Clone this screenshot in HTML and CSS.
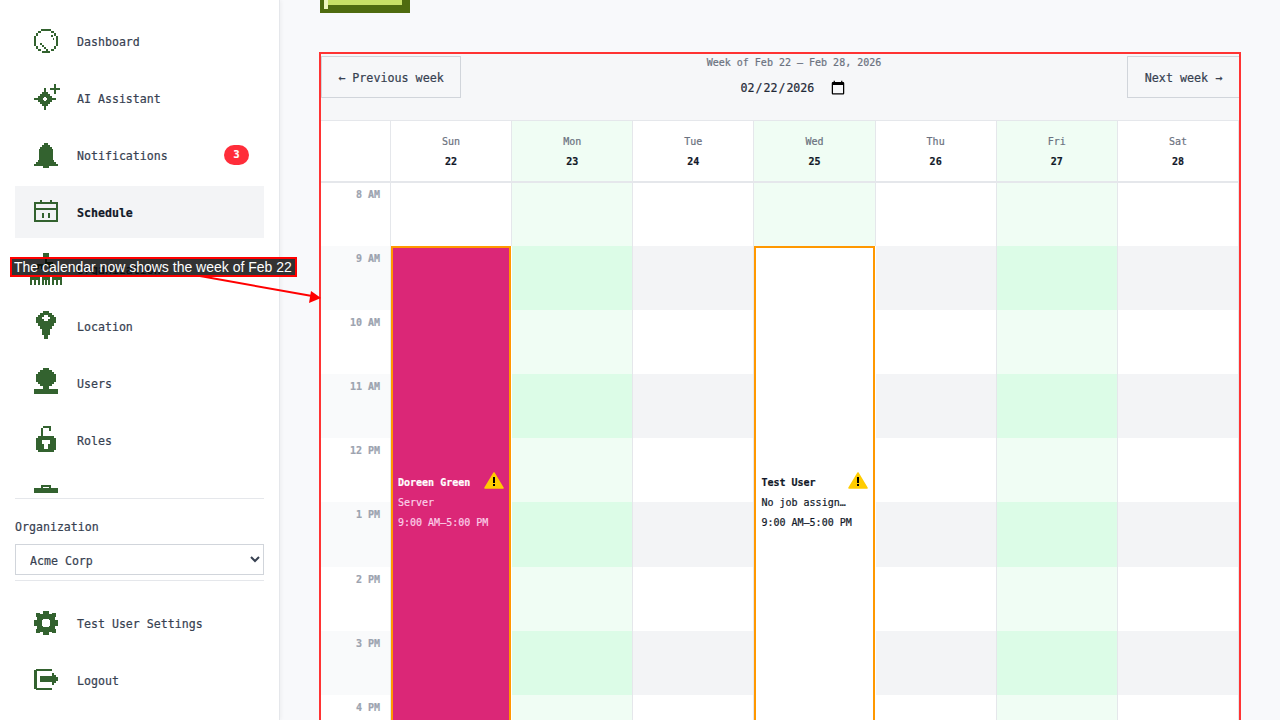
FILE: index.html
```html
<!DOCTYPE html>
<html lang="en">
<head>
    <meta charset="UTF-8">
    <title>Schedule</title>
    <link rel="stylesheet" href="styles.css">
</head>
<body>

<aside class="sidebar">
    <nav class="nav">
        <a class="nav-item">
            <svg class="icon" viewBox="0 0 24 24"><path d="M7 0h10v2H7zM4 2h3v2H4zM17 2h3v2h-3zM2 4h2v3H2zM20 4h2v3h-2zM0 7h2v10H0zM22 7h2v10h-2zM2 17h2v3H2zM20 17h2v3h-2zM4 20h3v2H4zM17 20h3v2h-3zM8 22h8v2H8zM6 14h2v2H6zM8 16h2v2H8zM10 18h2v2h-2zM12 20h2v2h-2zM17 6h2v2h-2zM19 9h1v2h-1z"/></svg>
            <span>Dashboard</span>
        </a>
        <a class="nav-item">
            <svg class="icon" viewBox="0 0 24 24"><g transform="translate(0 1)"><path fill-rule="evenodd" d="M10 1h2v4h2v2h2v2h2v2h4v2h-4v2h-2v2h-2v2h-2v4h-2v-4H8v-2H6v-2H4v-2H0v-2h4V9h2V7h2V5h2zM10 10h2v1h1v2h-1v1h-2v-1H9v-2h1z"/><path d="M20-3h2v4h4v2h-4v4h-2V3h-4V1h4z"/></g></svg>
            <span>AI Assistant</span>
        </a>
        <a class="nav-item">
            <svg class="icon" viewBox="0 0 24 24"><path transform="translate(0 1)" d="M10-1h4v2h2v2h2v2h1v11h1v2h2v2h2v2h-9v2H9v-2H0v-2h2v-2h2v-2h1V5h1V3h2V1h2z"/></svg>
            <span>Notifications</span>
            <b class="badge">3</b>
        </a>
        <a class="nav-item active">
            <svg class="icon" viewBox="0 0 24 24"><path fill-rule="evenodd" d="M6 0h2v2h8V0h2v2h6v20H0V2h6zM2 4v4h20V4zM2 10v10h20V10z"/><path d="M8 13h2v5H8zM14 13h2v5h-2z"/></svg>
            <span>Schedule</span>
        </a>
        <a class="nav-item">
            <svg class="icon" viewBox="0 0 24 24"><path d="M9-4h6v5h-2v4h6v4h-2v3h-2V9H9v3H7V9H5v3H3V7h8V1H9zM-4 20h10v3H-4zM-4 23h2v5h-2zM0 23h2v5H0zM4 23h2v5H4zM8 20h8v3H8zM8 23h2v5H8zM11 23h2v5h-2zM14 23h2v5h-2zM18 20h10v3H18zM18 23h2v5h-2zM22 23h2v5h-2zM26 23h2v5h-2z"/></svg>
            <span>Organization</span>
        </a>
        <a class="nav-item">
            <svg class="icon" viewBox="0 0 24 24"><path transform="translate(0 1)" fill-rule="evenodd" d="M9-4h6v2h3v2h2v2h2v6h-2v3h-2v3h-2v6h-2v4h-4v-4H8v-6H6v-3H4V8H2V2h2V0h2v-2h3zM10 0v2H8v2h2v2h4V4h2V2h-2V0z"/></svg>
            <span>Location</span>
        </a>
        <a class="nav-item">
            <svg class="icon" viewBox="0 0 24 24"><path transform="translate(0 1)" d="M9-4h6v2h3v2h2v2h2v8h-2v2h-2v2h-3v3h9v5H0v-5h9v-3H6v-2H4v-2H2V2h2V0h2v-2h3z"/></svg>
            <span>Users</span>
        </a>
        <a class="nav-item">
            <svg class="icon" viewBox="0 0 24 24"><g transform="translate(0 1)"><path fill-rule="evenodd" d="M4 7h16v2h2v12h-2v2H4v-2H2V9h2zM8 11v4h2v5h4v-5h2v-4z"/><path d="M7-1h2v8H7zM9-3h8v2H9zM15-1h2v3h-2z"/></g></svg>
            <span>Roles</span>
        </a>
        <a class="nav-item">
            <svg class="icon" viewBox="0 0 24 24"><path d="M7 0h10v3h-2V2H9v1H7zM0 3h24v16H0z"/></svg>
        </a>
    </nav>

    <div class="org-box">
        <label class="org-label" for="org-select">Organization</label>
        <select id="org-select" class="org-select">
            <option>Acme Corp</option>
        </select>
    </div>

    <div class="bottom-nav">
        <a class="nav-item">
            <svg class="icon" viewBox="0 0 24 24"><path fill-rule="evenodd" d="M9 0h6v3h3V2h4v4h-1v3h3v6h-3v3h1v4h-4v-1h-3v3H9v-3H6v1H2v-4h1v-3H0V9h3V6H2V2h4v1h3zM9 8v1H8v6h1v1h6v-1h1V9h-1V8z"/></svg>
            <span>Test User Settings</span>
        </a>
        <a class="nav-item">
            <svg class="icon" viewBox="0 0 24 24"><path d="M2 1h16v2H3v17h15v2H2v-1H0V2h2z"/><path d="M6 8h12V5h2v2h2v2h2v4h-2v2h-2v2h-2v-3H6z"/></svg>
            <span>Logout</span>
        </a>
    </div>
</aside>

<main class="main">
    <div class="action-btn"></div>

    <section class="calendar">
        <div class="toolbar">
            <button class="week-btn">← Previous week</button>
            <div class="week-center">
                <div class="week-label">Week of Feb 22 – Feb 28, 2026</div>
                <input class="week-date" type="date" value="2026-02-22">
            </div>
            <button class="week-btn next">Next week →</button>
        </div>

        <div class="grid">
            <div class="head"></div>
            <div class="head"><span>Sun</span><b>22</b></div>
            <div class="head green"><span>Mon</span><b>23</b></div>
            <div class="head"><span>Tue</span><b>24</b></div>
            <div class="head green"><span>Wed</span><b>25</b></div>
            <div class="head"><span>Thu</span><b>26</b></div>
            <div class="head green"><span>Fri</span><b>27</b></div>
            <div class="head"><span>Sat</span><b>28</b></div>

            <div class="event pink sun">
                <div class="event-top">
                    <b>Doreen Green</b>
                    <svg class="warn" viewBox="0 0 20 17"><path class="warn-bg" d="M10 1 19 16H1z"/><path d="M9 5h2v6H9zM9 12h2v2H9z"/></svg>
                </div>
                <div class="event-job">Server</div>
                <div class="event-job">9:00 AM–5:00 PM</div>
            </div>
            <div class="event wed">
                <div class="event-top">
                    <b>Test User</b>
                    <svg class="warn" viewBox="0 0 20 17"><path class="warn-bg" d="M10 1 19 16H1z"/><path d="M9 5h2v6H9zM9 12h2v2H9z"/></svg>
                </div>
                <div class="event-job">No job assign…</div>
                <div class="event-job">9:00 AM–5:00 PM</div>
            </div>

            <!-- 8 AM -->
            <div class="time first">8 AM</div>
            <div class="cell"></div><div class="cell green"></div><div class="cell"></div><div class="cell green"></div><div class="cell"></div><div class="cell green"></div><div class="cell"></div>

            <!-- from 9 AM the Sun and Wed columns are covered by the events -->
            <div class="time alt">9 AM</div>
            <div class="cell green alt"></div><div class="cell alt"></div><div class="cell alt"></div><div class="cell green alt"></div><div class="cell alt"></div>
            <div class="time">10 AM</div>
            <div class="cell green"></div><div class="cell"></div><div class="cell"></div><div class="cell green"></div><div class="cell"></div>
            <div class="time alt">11 AM</div>
            <div class="cell green alt"></div><div class="cell alt"></div><div class="cell alt"></div><div class="cell green alt"></div><div class="cell alt"></div>
            <div class="time">12 PM</div>
            <div class="cell green"></div><div class="cell"></div><div class="cell"></div><div class="cell green"></div><div class="cell"></div>
            <div class="time alt">1 PM</div>
            <div class="cell green alt"></div><div class="cell alt"></div><div class="cell alt"></div><div class="cell green alt"></div><div class="cell alt"></div>
            <div class="time">2 PM</div>
            <div class="cell green"></div><div class="cell"></div><div class="cell"></div><div class="cell green"></div><div class="cell"></div>
            <div class="time alt">3 PM</div>
            <div class="cell green alt"></div><div class="cell alt"></div><div class="cell alt"></div><div class="cell green alt"></div><div class="cell alt"></div>
            <div class="time">4 PM</div>
            <div class="cell green"></div><div class="cell"></div><div class="cell"></div><div class="cell green"></div><div class="cell"></div>
        </div>
    </section>
</main>

<!-- Annotation over the page -->
<div class="note">The calendar now shows the week of Feb 22</div>
<svg class="note-arrow" viewBox="0 0 1280 720"><path class="note-line" d="M200 276 312 296"/><path class="note-head" d="M321 298 309 303 311 291z"/></svg>

</body>
</html>
```

FILE: styles.css
```css
* {
    margin: 0;
    padding: 0;
    box-sizing: border-box;
    font-family: 'DejaVu Sans Mono', monospace;
}

body {
    display: flex;
    height: 720px;
    overflow: hidden;
    background: #f8f9fb;
    color: #374151;
    font-size: 11.6px;
    -webkit-text-stroke: 0.2px;
}

/* Sidebar */
.sidebar {
    width: 280px;
    flex-shrink: 0;
    height: 720px;
    display: flex;
    flex-direction: column;
    padding: 0 15px;
    background: #fff;
    border-right: 1px solid #e5e7eb;
    box-shadow: 1px 0 4px rgba(0, 0, 0, 0.05);
}

.nav {
    height: 493px;
    padding-top: 15px;
    overflow: hidden;
    display: flex;
    flex-direction: column;
    gap: 5px;
}

.nav-item {
    height: 52px;
    flex-shrink: 0;
    display: flex;
    align-items: center;
    gap: 19px;
    padding: 0 15px 0 19px;
}

.nav-item span {
    padding-top: 2px;
}

.nav-item.active {
    background: #f3f4f6;
    color: #111827;
    font-weight: bold;
}

.icon {
    width: 24px;
    height: 24px;
    flex-shrink: 0;
    overflow: visible;
    fill: #33622f;
    shape-rendering: crispEdges;
}

.badge {
    margin-left: auto;
    width: 25px;
    height: 20px;
    border-radius: 10px;
    background: #ff2d3a;
    color: #fff;
    font-size: 10px;
    line-height: 20px;
    text-align: center;
}

.org-box {
    margin-top: 5px;
    padding: 20px 0 5px;
    border-top: 1px solid #e5e7eb;
    border-bottom: 1px solid #e5e7eb;
}

.org-label {
    display: block;
    height: 25px;
    line-height: 17px;
}

.org-select {
    display: block;
    width: 100%;
    height: 31px;
    padding: 2px 0 0 10px;
    background: #fff;
    border: 1px solid #d1d5db;
    border-radius: 0;
    color: #374151;
    font-size: 11.6px;
}

.bottom-nav {
    padding-top: 16px;
    display: flex;
    flex-direction: column;
    gap: 5px;
}

/* Main area */
.main {
    flex: 1;
    padding: 0 41px;
    min-width: 0;
}

.action-btn {
    width: 90px;
    height: 13px;
    margin: 0 0 41px -1px;
    background:
        linear-gradient(#eff6bd, #eff6bd) 4px 0 / 4px 9px no-repeat,
        linear-gradient(#c8e066, #c8e066) 4px 0 / 78px 5px no-repeat,
        #4f6b0f;
}

.calendar {
    outline: 2px solid #ff3333;
}

.toolbar {
    height: 66px;
    padding-top: 2px;
    display: flex;
    justify-content: space-between;
    align-items: flex-start;
    background: #f6f7f9;
}

.week-btn {
    height: 42px;
    width: 140px;
    padding-top: 2px;
    background: #f6f7f9;
    border: 1px solid #d1d5db;
    color: #374151;
    font-size: 11.7px;
}

.week-btn.next {
    width: 113px;
    margin-right: -1px;
}

.week-center {
    display: flex;
    flex-direction: column;
    align-items: center;
    padding-top: 1px;
}

.week-label {
    height: 12px;
    font-size: 10px;
    line-height: 12px;
    color: #6b7280;
}

.week-date {
    width: 123px;
    height: 20px;
    margin-top: 9px;
    padding: 0 9px 0 7px;
    background: transparent;
    border: none;
    color: #1f2937;
    font-size: 11.6px;
}

.week-date::-webkit-calendar-picker-indicator {
    width: 16px;
    height: 16px;
    margin: 0;
    padding: 0;
}

/* Week grid */
.grid {
    display: grid;
    grid-template-columns: 70px repeat(7, 1fr);
    grid-template-rows: 62px 63.1px repeat(8, 64.1px);
    background: #fff;
    border-top: 1px solid #e5e7eb;
}

.head {
    display: flex;
    flex-direction: column;
    align-items: center;
    gap: 8px;
    padding-top: 15px;
    background: #fff;
    border-right: 1px solid #e5e7eb;
    border-bottom: 2px solid #e5e7eb;
    font-size: 10px;
    line-height: 12px;
    color: #6b7280;
}

.head b {
    color: #111827;
}

.head.green {
    background: #f0fdf4;
}

.time {
    padding: 7px 10px 0 0;
    border-right: 1px solid #e5e7eb;
    font-size: 10px;
    font-weight: bold;
    line-height: 12px;
    text-align: right;
    color: #9ca3af;
}

.time.first {
    padding-top: 6px;
}

.time.alt {
    background: #f9fafb;
}

.cell {
    border-right: 1px solid #e5e7eb;
}

.cell.green {
    background: #f0fdf4;
}

.cell.alt {
    background: #f3f4f6;
}

.cell.green.alt {
    background: #dcfce7;
}

.event {
    grid-row: 3 / span 8;
    margin-right: 1px;
    display: flex;
    flex-direction: column;
    justify-content: center;
    padding: 1px 5px 0;
    background: #fff;
    border: 2px solid #ff9800;
    color: #111827;
    font-size: 10px;
    line-height: 20px;
}

.event.sun {
    grid-column: 2;
}

.event.wed {
    grid-column: 5;
}

.event.pink {
    background: #db2777;
    color: #fff;
}

.event.pink .event-job {
    color: #fbcfe8;
}

.event-top {
    display: flex;
    justify-content: space-between;
    align-items: center;
    height: 20px;
}

.warn {
    width: 20px;
    height: 17px;
    margin-top: -4px;
    flex-shrink: 0;
}

.warn-bg {
    fill: #ffcc00;
    stroke: #ffcc00;
    stroke-width: 1.5;
    stroke-linejoin: round;
}

/* Annotation */
.note {
    position: absolute;
    left: 10px;
    top: 257px;
    width: 287px;
    height: 20px;
    background: rgba(0, 0, 0, 0.8);
    border: 2px solid #ff0000;
    color: #fff;
    font-family: 'Liberation Sans', sans-serif;
    font-size: 14px;
    line-height: 16px;
    padding-left: 2px;
    white-space: nowrap;
    -webkit-text-stroke: 0;
}

.note-arrow {
    position: absolute;
    left: 0;
    top: 0;
    width: 1280px;
    height: 720px;
    pointer-events: none;
}

.note-line {
    stroke: #ff0000;
    stroke-width: 2;
    fill: none;
}

.note-head {
    fill: #ff0000;
}
```
